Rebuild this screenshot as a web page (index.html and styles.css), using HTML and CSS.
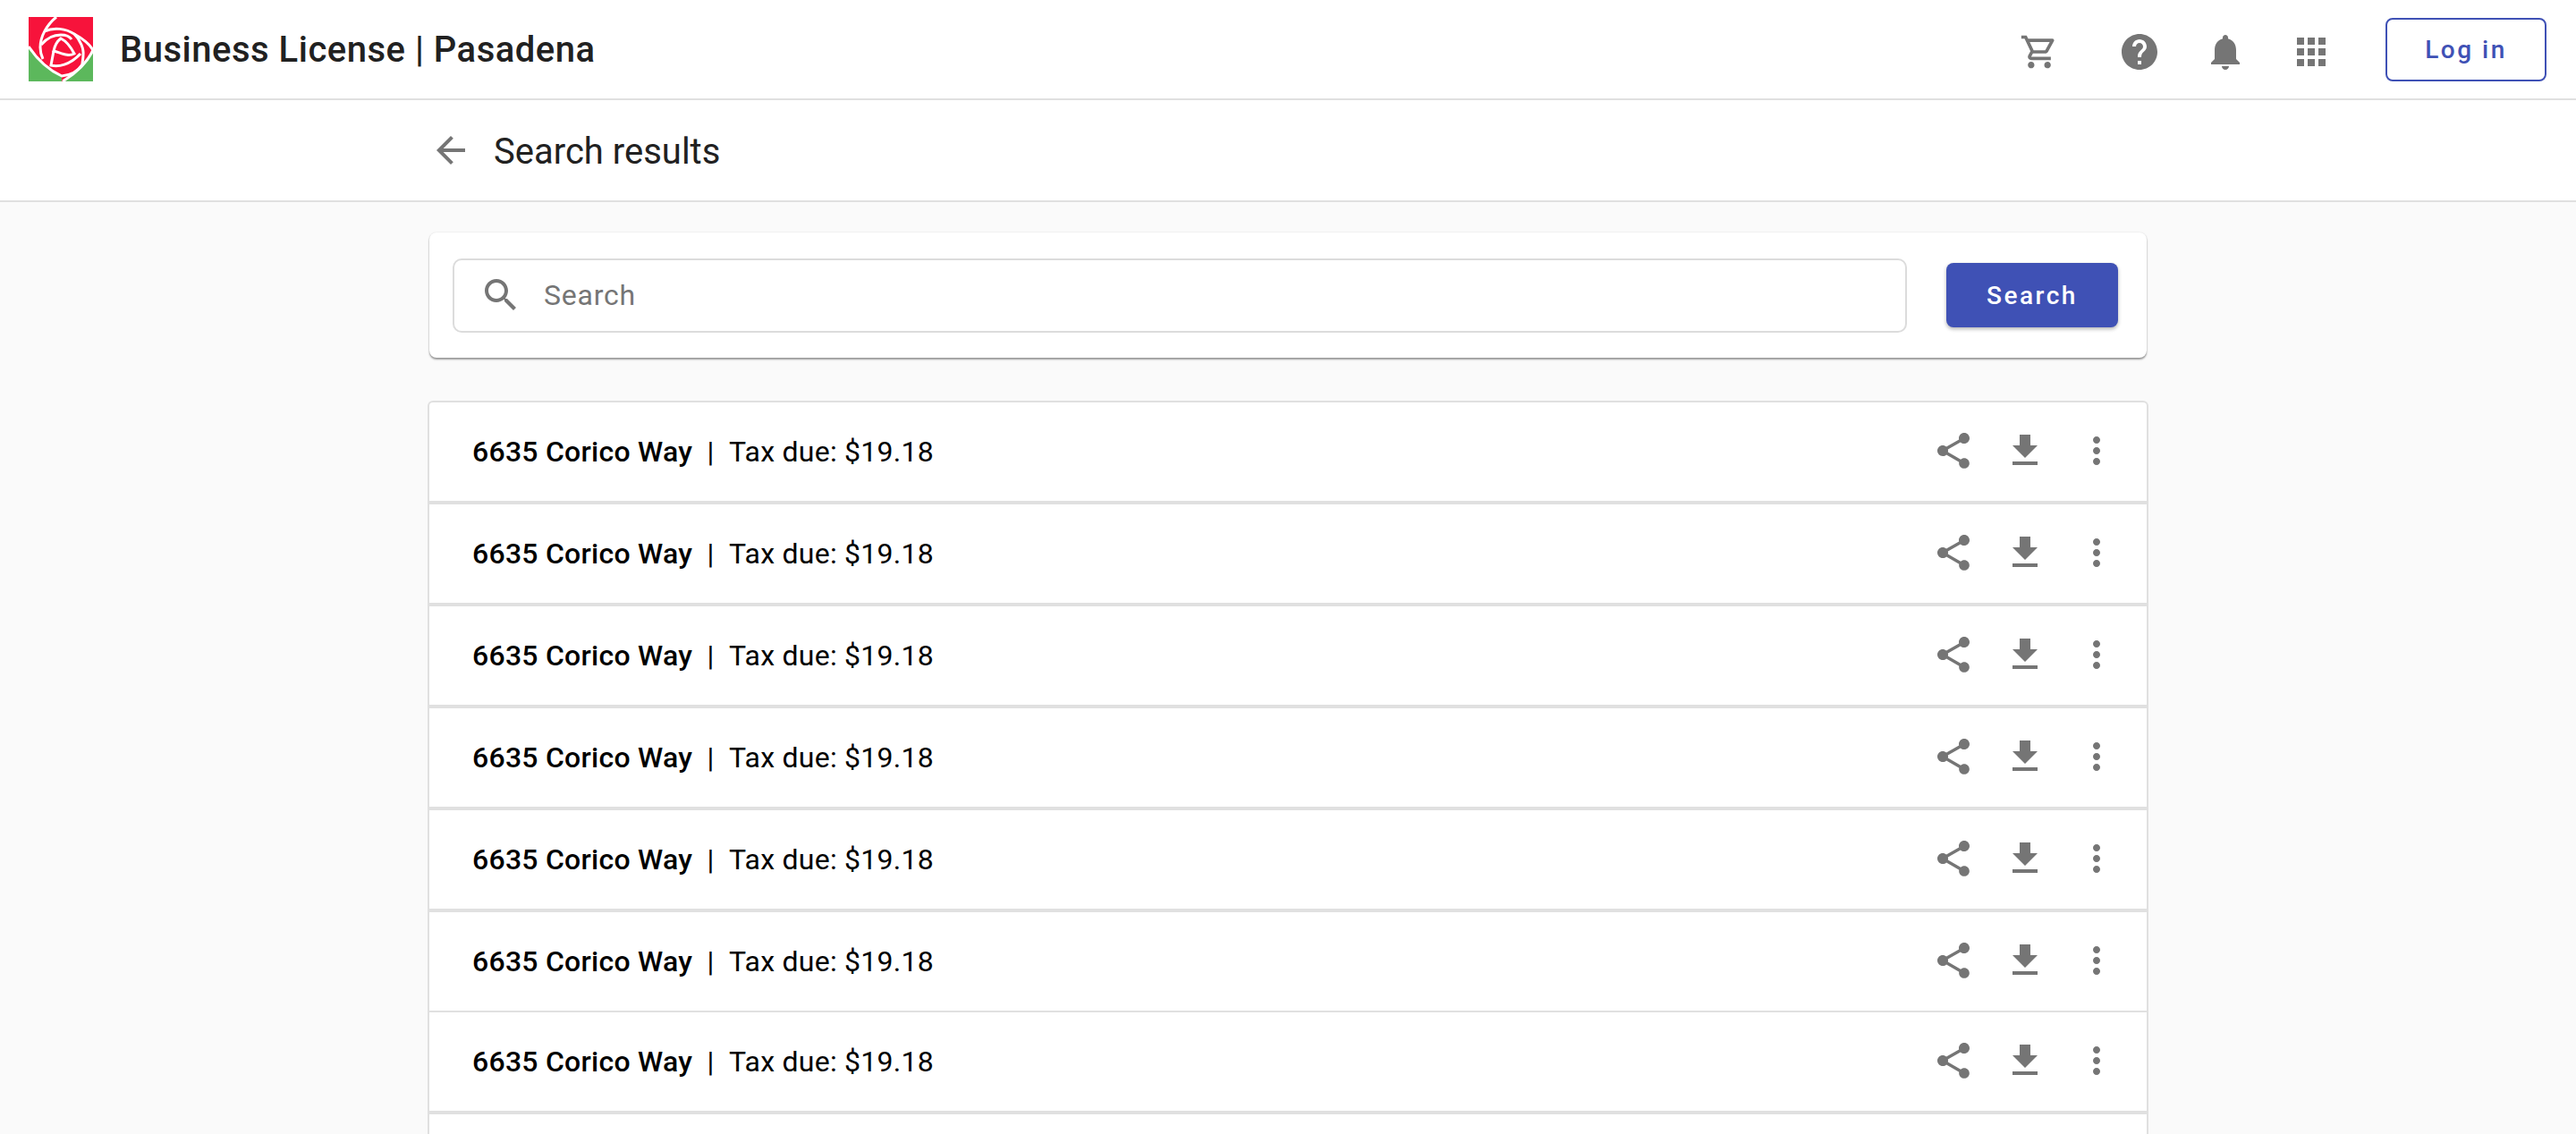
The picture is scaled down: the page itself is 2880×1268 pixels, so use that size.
FILE: index.html
```html
<!DOCTYPE html>
<html lang="en">
<head>
<meta charset="utf-8">
<title>Business License | Pasadena</title>
<link rel="stylesheet" href="styles.css">
</head>
<body>
<svg class="sprite" width="0" height="0" aria-hidden="true">
  <symbol id="i-share" viewBox="0 0 24 24"><path d="M18 16.08c-.76 0-1.44.3-1.96.77L8.91 12.7c.05-.23.09-.46.09-.7s-.04-.47-.09-.7l7.05-4.11c.54.5 1.25.81 2.04.81 1.66 0 3-1.34 3-3s-1.34-3-3-3-3 1.34-3 3c0 .24.04.47.09.7L8.04 9.81C7.5 9.31 6.79 9 6 9c-1.66 0-3 1.34-3 3s1.34 3 3 3c.79 0 1.5-.31 2.04-.81l7.12 4.16c-.05.21-.08.43-.08.65 0 1.61 1.31 2.92 2.92 2.92s2.92-1.31 2.92-2.92-1.31-2.92-2.92-2.92z"/></symbol>
  <symbol id="i-download" viewBox="0 0 24 24"><path d="M19 9h-4V3H9v6H5l7 7 7-7zM5 18v2h14v-2H5z"/></symbol>
  <symbol id="i-more" viewBox="0 0 24 24"><path d="M12 8c1.1 0 2-.9 2-2s-.9-2-2-2-2 .9-2 2 .9 2 2 2zm0 2c-1.1 0-2 .9-2 2s.9 2 2 2 2-.9 2-2-.9-2-2-2zm0 6c-1.1 0-2 .9-2 2s.9 2 2 2 2-.9 2-2-.9-2-2-2z"/></symbol>
</svg>

<header class="topbar">
  <svg class="logo" viewBox="0 0 72 72" aria-label="Pasadena logo">
    <rect width="72" height="72" fill="#f7133b"/>
    <path d="M0 33C8 45 20 58 37 66L37 72H0Z" fill="#5cb85c"/>
    <path d="M72 38V72H40C54 62 65 52 72 38Z" fill="#5cb85c"/>
    <g fill="none" stroke="#fff" stroke-width="3">
      <path d="M0 33C8 45 20 58 37 66C47 65 55 61 60 53"/>
      <path d="M72 37C66 50 54 62 38 72"/>
      <path d="M31 0C20 9 13 22 13 34C13 40 14 43 16 47"/>
      <path d="M18 16C28 11 42 13 51 19C58 26 62 36 61 43C61 47 60 50 60 53"/>
      <path d="M51 19C60 24 68 30 72 37"/>
      <path d="M14 31C20 24 28 20 36 20C42 20 46 22 48 25"/>
      <path d="M36 24C44 28 48 35 51 41C44 45 36 40 28 38C29 33 32 27 36 24Z"/>
      <path d="M28 38L25 54C33 56 46 54 58 41"/>
    </g>
  </svg>
  <span class="app-title">Business License | Pasadena</span>
  <nav class="top-actions">
    <svg class="top-icon cart" viewBox="0 0 24 24"><path d="M15.55 13c.75 0 1.41-.41 1.75-1.03l3.58-6.49c.37-.66-.11-1.48-.87-1.48H5.21l-.94-2H1v2h2l3.6 7.59-1.35 2.44C4.52 15.37 5.48 17 7 17h12v-2H7l1.1-2h7.45zM6.16 6h12.15l-2.76 5H8.53L6.16 6zM7 18c-1.1 0-1.99.9-1.99 2S5.9 22 7 22s2-.9 2-2-.9-2-2-2zm10 0c-1.1 0-1.99.9-1.99 2s.89 2 1.99 2 2-.9 2-2-.9-2-2-2z"/></svg>
    <svg class="top-icon help" viewBox="0 0 24 24"><path d="M12 2C6.48 2 2 6.48 2 12s4.48 10 10 10 10-4.48 10-10S17.52 2 12 2zm1 17h-2v-2h2v2zm2.07-7.75l-.9.92C13.45 12.9 13 13.5 13 15h-2v-.5c0-1.1.45-2.1 1.17-2.83l1.24-1.26c.37-.36.59-.86.59-1.41 0-1.1-.9-2-2-2s-2 .9-2 2H8c0-2.21 1.79-4 4-4s4 1.79 4 4c0 .88-.36 1.68-.93 2.25z"/></svg>
    <svg class="top-icon bell" viewBox="0 0 24 24"><path d="M12 22c1.1 0 2-.9 2-2h-4c0 1.1.89 2 2 2zm6-6v-5c0-3.07-1.64-5.64-4.5-6.32V4c0-.83-.67-1.5-1.5-1.5s-1.5.67-1.5 1.5v.68C7.63 5.36 6 7.92 6 11v5l-2 2v1h16v-1l-2-2z"/></svg>
    <svg class="top-icon apps" viewBox="0 0 24 24"><path d="M4 8h4V4H4v4zm6 12h4v-4h-4v4zm-6 0h4v-4H4v4zm0-6h4v-4H4v4zm6 0h4v-4h-4v4zm6-10v4h4V4h-4zm-6 4h4V4h-4v4zm6 6h4v-4h-4v4zm0 6h4v-4h-4v4z"/></svg>
    <button class="login" type="button">Log in</button>
  </nav>
</header>

<div class="subbar">
  <div class="subbar-inner">
    <svg class="back" viewBox="0 0 24 24"><path d="M20 11H7.83l5.59-5.59L12 4l-8 8 8 8 1.41-1.41L7.83 13H20v-2z"/></svg>
    <h1 class="page-title">Search results</h1>
  </div>
</div>

<main class="content">
  <section class="search-card">
    <label class="search-field">
      <svg class="search-icon" viewBox="0 0 24 24"><path d="M15.5 14h-.79l-.28-.27C15.41 12.59 16 11.11 16 9.5 16 5.91 13.09 3 9.5 3S3 5.91 3 9.5 5.91 16 9.5 16c1.61 0 3.09-.59 4.23-1.57l.27.28v.79l5 4.99L20.49 19l-4.99-5zm-6 0C7.01 14 5 11.99 5 9.5S7.01 5 9.5 5 14 7.01 14 9.5 11.99 14 9.5 14z"/></svg>
      <input class="search-input" type="text" placeholder="Search">
    </label>
    <button class="search-btn" type="button">Search</button>
  </section>

  <section class="results">
    <article class="row"><p class="row-text"><strong class="addr">6635 Corico Way</strong>&nbsp;&nbsp;|&nbsp;&nbsp;Tax due: $19.18</p><div class="row-actions"><svg class="act"><use href="#i-share"/></svg><svg class="act"><use href="#i-download"/></svg><svg class="act"><use href="#i-more"/></svg></div></article>
    <article class="row"><p class="row-text"><strong class="addr">6635 Corico Way</strong>&nbsp;&nbsp;|&nbsp;&nbsp;Tax due: $19.18</p><div class="row-actions"><svg class="act"><use href="#i-share"/></svg><svg class="act"><use href="#i-download"/></svg><svg class="act"><use href="#i-more"/></svg></div></article>
    <article class="row"><p class="row-text"><strong class="addr">6635 Corico Way</strong>&nbsp;&nbsp;|&nbsp;&nbsp;Tax due: $19.18</p><div class="row-actions"><svg class="act"><use href="#i-share"/></svg><svg class="act"><use href="#i-download"/></svg><svg class="act"><use href="#i-more"/></svg></div></article>
    <article class="row"><p class="row-text"><strong class="addr">6635 Corico Way</strong>&nbsp;&nbsp;|&nbsp;&nbsp;Tax due: $19.18</p><div class="row-actions"><svg class="act"><use href="#i-share"/></svg><svg class="act"><use href="#i-download"/></svg><svg class="act"><use href="#i-more"/></svg></div></article>
    <article class="row"><p class="row-text"><strong class="addr">6635 Corico Way</strong>&nbsp;&nbsp;|&nbsp;&nbsp;Tax due: $19.18</p><div class="row-actions"><svg class="act"><use href="#i-share"/></svg><svg class="act"><use href="#i-download"/></svg><svg class="act"><use href="#i-more"/></svg></div></article>
    <article class="row row-thin"><p class="row-text"><strong class="addr">6635 Corico Way</strong>&nbsp;&nbsp;|&nbsp;&nbsp;Tax due: $19.18</p><div class="row-actions"><svg class="act"><use href="#i-share"/></svg><svg class="act"><use href="#i-download"/></svg><svg class="act"><use href="#i-more"/></svg></div></article>
    <article class="row"><p class="row-text"><strong class="addr">6635 Corico Way</strong>&nbsp;&nbsp;|&nbsp;&nbsp;Tax due: $19.18</p><div class="row-actions"><svg class="act"><use href="#i-share"/></svg><svg class="act"><use href="#i-download"/></svg><svg class="act"><use href="#i-more"/></svg></div></article>
    <article class="row row-last"></article>
  </section>
</main>
</body>
</html>
```
FILE: styles.css
```css
* { box-sizing: border-box; }
html, body { height: 100%; overflow: hidden; }
body {
  margin: 0;
  background: #fafafa;
  font-family: Roboto, "Liberation Sans", sans-serif;
  color: #000;
}
.sprite { position: absolute; }

.topbar {
  display: flex;
  align-items: center;
  height: 112px;
  padding: 0 33px 0 32px;
  background: #fff;
  border-bottom: 2px solid #e0e0e0;
}
.logo { width: 72px; height: 72px; flex: none; }
.app-title {
  margin-left: 30px;
  font-size: 40px;
  font-weight: 500;
  letter-spacing: 0.5px;
  color: #212121;
}
.top-actions { margin-left: auto; display: flex; align-items: center; }
.top-icon { width: 48px; height: 48px; fill: #757575; flex: none; }
.cart { width: 44px; height: 44px; margin: 6px 66px 0 0; }
.help { margin: 6px 48px 0 0; }
.bell { margin: 5px 48px 0 0; }
.apps { margin: 6px 59px 0 0; }
.login {
  width: 180px;
  height: 71px;
  padding-top: 2px;
  background: #fff;
  border: 2px solid #3f51b5;
  border-radius: 8px;
  color: #3f51b5;
  font: 500 28px Roboto, sans-serif;
  letter-spacing: 2.5px;
}

.subbar {
  height: 114px;
  background: #fff;
  border-bottom: 2px solid #e0e0e0;
}
.subbar-inner {
  width: 1920px;
  height: 112px;
  margin: 0 auto;
  display: flex;
  align-items: center;
  gap: 24px;
}
.back { width: 48px; height: 48px; fill: #757575; }
.page-title { margin: 2px 0 0; font-size: 40px; font-weight: 400; color: #212121; }

.content { width: 1920px; margin: 0 auto; padding-top: 34px; }
.search-card {
  display: flex;
  align-items: center;
  height: 140px;
  padding: 0 32px 0 26px;
  background: #fff;
  border-radius: 8px;
  box-shadow: 0 2px 2px rgba(0,0,0,.38), 0 0 2px rgba(0,0,0,.12);
}
.search-field {
  flex: 1;
  display: flex;
  align-items: center;
  gap: 22px;
  height: 83px;
  padding-left: 28px;
  border: 2px solid #dcdcdc;
  border-radius: 10px;
}
.search-icon { width: 48px; height: 48px; fill: #757575; flex: none; }
.search-input {
  flex: 1;
  border: 0;
  outline: 0;
  background: transparent;
  font: 400 32px Roboto, sans-serif;
  letter-spacing: .75px;
}
.search-input::placeholder { color: #757575; opacity: 1; }
.search-btn {
  width: 192px;
  height: 72px;
  margin-left: 44px;
  flex: none;
  border: 0;
  border-radius: 8px;
  background: #3f51b5;
  color: #fff;
  font: 500 28px Roboto, sans-serif;
  letter-spacing: 2.5px;
  box-shadow: 0 2px 4px rgba(0,0,0,.3);
}

.results {
  margin-top: 50px;
  background: #fff;
  border-radius: 4px 4px 0 0;
  box-shadow: 0 0 0 2px #e0e0e0;
}
.row {
  display: flex;
  align-items: center;
  justify-content: space-between;
  height: 114px;
  padding: 0 32px 0 48px;
  border-bottom: 4px solid #e0e0e0;
}
.row-thin { height: 112px; border-bottom-width: 2px; }
.row-last { height: 22px; border-bottom: 0; }
.row-text { margin: 0; font-size: 32px; font-weight: 400; letter-spacing: .25px; color: #000; }
.addr { font-weight: 500; }
.row-actions { display: flex; gap: 32px; margin-top: -2px; }
.act { width: 48px; height: 48px; fill: #757575; }
```
